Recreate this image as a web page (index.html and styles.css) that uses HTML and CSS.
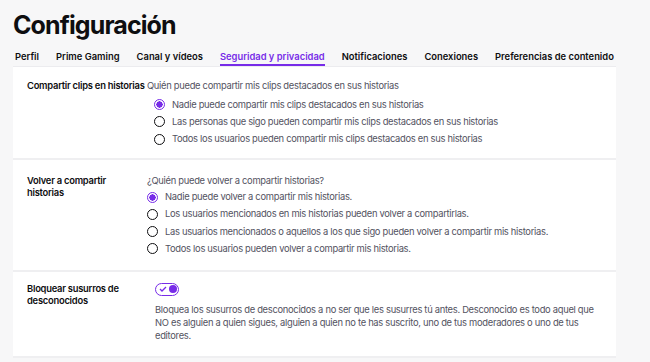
FILE: index.html
```html
<!DOCTYPE html>
<html lang="es">
<head>
  <meta charset="UTF-8">
  <meta name="viewport" content="width=device-width, initial-scale=1.0">
  <title>Configuración</title>
  <link rel="stylesheet" href="styles.css">
</head>
<body>

  <h1>Configuración</h1>

  <nav class="tabs">
    <a href="#">Perfil</a>
    <a href="#">Prime Gaming</a>
    <a href="#">Canal y vídeos</a>
    <a href="#" class="active">Seguridad y privacidad</a>
    <a href="#">Notificaciones</a>
    <a href="#">Conexiones</a>
    <a href="#">Preferencias de contenido</a>
  </nav>

  <div class="card">

    <div class="setting first">
      <div class="label">Compartir clips en historias</div>
      <div class="content">
        <p class="desc">Quién puede compartir mis clips destacados en sus historias</p>
        <ul class="options indent">
          <li><span class="radio checked"></span>Nadie puede compartir mis clips destacados en sus historias</li>
          <li><span class="radio"></span>Las personas que sigo pueden compartir mis clips destacados en sus historias</li>
          <li><span class="radio"></span>Todos los usuarios pueden compartir mis clips destacados en sus historias</li>
        </ul>
      </div>
    </div>

    <div class="setting second">
      <div class="label">Volver a compartir historias</div>
      <div class="content">
        <p class="desc">¿Quién puede volver a compartir historias?</p>
        <ul class="options">
          <li><span class="radio checked"></span>Nadie puede volver a compartir mis historias.</li>
          <li><span class="radio"></span>Los usuarios mencionados en mis historias pueden volver a compartirlas.</li>
          <li><span class="radio"></span>Las usuarios mencionados o aquellos a los que sigo pueden volver a compartir mis historias.</li>
          <li><span class="radio"></span>Todos los usuarios pueden volver a compartir mis historias.</li>
        </ul>
      </div>
    </div>

    <div class="setting third">
      <div class="label">Bloquear susurros de desconocidos</div>
      <div class="content">
        <span class="toggle">
          <svg width="8" height="6" viewBox="0 0 8 6"><path d="M1 3 L3 5 L7 1" fill="none" stroke="#772ce8" stroke-width="1.3"/></svg>
          <span class="knob"></span>
        </span>
        <p class="long">Bloquea los susurros de desconocidos a no ser que les susurres tú antes. Desconocido es todo aquel que NO es alguien a quien sigues, alguien a quien no te has suscrito, uno de tus moderadores o uno de tus editores.</p>
      </div>
    </div>

  </div>

</body>
</html>
```

FILE: styles.css
```css
body {
  margin: 0;
  background-color: #f7f7f8;
  font-family: Inter, "Noto Sans", sans-serif;
  color: #0e0e10;
}

h1 {
  margin: 0;
  padding: 9px 0 0 13px;
  font-size: 25px;
  font-weight: 700;
  line-height: 32px;
  letter-spacing: -0.9px;
}

.tabs {
  display: flex;
  gap: 17px;
  padding: 9px 0 0 15px;
  height: 16px;
}

.tabs a {
  font-size: 9.4px;
  font-weight: 600;
  color: #0e0e10;
  text-decoration: none;
  line-height: 14px;
  white-space: nowrap;
  border-bottom: 2px solid transparent;
}

.tabs a.active {
  color: #772ce8;
  border-bottom-color: #772ce8;
}

.card {
  margin-left: 13px;
  width: 603px;
  background-color: #fff;
  border-top: 1px solid #ececef;
}

.setting {
  display: flex;
  padding-left: 14px;
  border-bottom: 2px solid #efeff1;
}

.first {
  padding-top: 13px;
  padding-bottom: 10px;
}

.second {
  padding-top: 15px;
  padding-bottom: 12px;
}

.third {
  padding-top: 11px;
  padding-bottom: 14px;
}

.label {
  width: 120px;
  flex-shrink: 0;
  font-size: 9.4px;
  font-weight: 600;
  letter-spacing: -0.25px;
  line-height: 12px;
  white-space: nowrap;
}

.second .label,
.third .label {
  white-space: normal;
}

.second .label {
  width: 95px;
  padding-right: 25px;
}

.third .label {
  width: 105px;
  padding-right: 23px;
}

.desc,
.options li,
.long {
  font-size: 9.4px;
  letter-spacing: -0.3px;
  color: #53535f;
}

.desc {
  margin: 0 0 4px;
  line-height: 12px;
}

.second .desc {
  margin-bottom: 1.5px;
}

.options {
  list-style: none;
  margin: 0;
  padding: 0;
}

.options.indent {
  padding-left: 7px;
}

.options li {
  display: flex;
  align-items: center;
  height: 17.3px;
  line-height: 12px;
}

.radio {
  width: 11px;
  height: 11px;
  box-sizing: border-box;
  border: 1.5px solid #0e0e10;
  border-radius: 50%;
  margin-right: 7px;
  flex-shrink: 0;
}

.radio.checked {
  border-color: #772ce8;
  background: radial-gradient(circle, #772ce8 0 3px, #fff 3.3px);
}

.toggle {
  display: flex;
  align-items: center;
  justify-content: space-between;
  width: 24px;
  height: 13px;
  box-sizing: border-box;
  border: 1.5px solid #772ce8;
  border-radius: 7px;
  padding: 0 1.5px 0 3px;
  margin-bottom: 7px;
}

.knob {
  width: 8px;
  height: 8px;
  border-radius: 50%;
  background-color: #772ce8;
}

.long {
  margin: 0;
  line-height: 13px;
  padding-right: 20px;
}
```
